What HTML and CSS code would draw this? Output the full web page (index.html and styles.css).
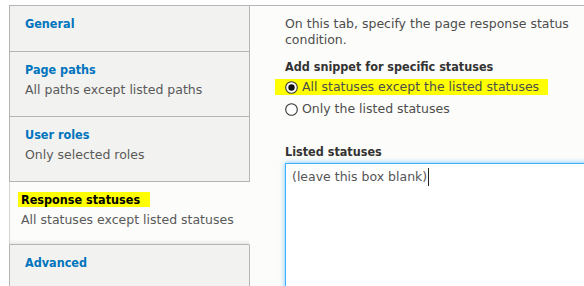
FILE: index.html
```html
<!DOCTYPE html>
<html lang="en">
<head>
<meta charset="utf-8">
<title>Response statuses</title>
<link rel="stylesheet" href="styles.css">
</head>
<body>
<div class="frame">
  <ul class="tabs">
    <li class="tab"><a class="tab-title" href="#">General</a></li>
    <li class="tab"><a class="tab-title" href="#">Page paths</a><span class="summary">All paths except listed paths</span></li>
    <li class="tab"><a class="tab-title" href="#">User roles</a><span class="summary">Only selected roles</span></li>
    <li class="tab is-selected"><span class="tab-title"><mark class="mark">Response statuses</mark></span><span class="summary">All statuses except listed statuses</span></li>
    <li class="tab"><a class="tab-title" href="#">Advanced</a></li>
  </ul>
  <div class="pane">
    <p class="desc">On this tab, specify the page response status condition.</p>
    <div class="label">Add snippet for specific statuses</div>
    <div class="radios">
      <label class="radio is-hl"><svg class="radio-icon" width="13" height="13" viewBox="0 0 13 13"><circle cx="6.5" cy="6.5" r="5.8" fill="#fff" stroke="#333" stroke-width="1.1"/><circle cx="6.5" cy="6.5" r="3.2" fill="#111"/></svg>All statuses except the listed statuses</label>
      <label class="radio"><svg class="radio-icon" width="13" height="13" viewBox="0 0 13 13"><circle cx="6.5" cy="6.5" r="5.8" fill="#fff" stroke="#333" stroke-width="1.1"/></svg>Only the listed statuses</label>
    </div>
    <div class="label label-gap">Listed statuses</div>
    <div class="textarea" role="textbox">(leave this box blank)<span class="caret"></span></div>
  </div>
</div>
</body>
</html>
```
FILE: styles.css
```css
html, body {
  margin: 0;
  padding: 0;
  background: #fff;
  overflow: hidden;
  width: 584px;
  height: 286px;
}
body {
  font-family: "DejaVu Sans", Verdana, sans-serif;
  font-size: 12.5px;
  color: #333;
}
.frame {
  display: flex;
  margin: 5px 0 0 9px;
  width: 575px;
  height: 280px;
  overflow: hidden;
  border-top: 1px solid #b5b5b5;
  background: #fcfcfa;
}
.tabs {
  list-style: none;
  margin: 0;
  padding: 0;
  width: 241px;
  flex: none;
}
.tab {
  display: flex;
  flex-direction: column;
  box-sizing: border-box;
  background: #f2f2f0;
  border-left: 1px solid #b5b5b5;
  border-right: 1px solid #b5b5b5;
  border-bottom: 1px solid #b5b5b5;
  padding: 7px 15px 17px;
}
.tab-title {
  line-height: 21px;
  font-family: "DejaVu Sans Condensed", "DejaVu Sans", sans-serif;
  font-stretch: condensed;
  font-weight: bold;
  color: #0074bd;
  text-decoration: none;
}
.summary {
  line-height: 19px;
  color: #595959;
}
.tab.is-selected {
  background: #fcfcfa;
  border-left-color: #d4d4d4;
  border-right-color: #fcfcfa;
  padding: 7px 15px 15px 11px;
  box-shadow: inset 0 -4px 4px -3px rgba(0, 0, 0, 0.12);
}
.tab.is-selected .tab-title {
  color: #000;
}
.mark {
  background: #ffff00;
  color: #000;
  padding: 0 10px 0 3px;
  margin-left: -3px;
}
.pane {
  flex: 1;
  min-width: 0;
  padding: 10px 0 0 35px;
  color: #4d4d4d;
  line-height: 16px;
}
.desc {
  margin: 0;
  max-width: 300px;
}
.label {
  margin-top: 11px;
  font-family: "DejaVu Sans Condensed", "DejaVu Sans", sans-serif;
  font-stretch: condensed;
  font-weight: bold;
  color: #333;
}
.label-gap {
  margin-top: 27px;
}
.radios {
  display: flex;
  flex-direction: column;
  align-items: flex-start;
  gap: 6px;
  margin-top: 4px;
}
.radio {
  display: flex;
  align-items: center;
  gap: 4px;
  height: 16px;
  padding: 0 9px 0 10px;
  margin-left: -10px;
  color: #4d4d4d;
}
.radio.is-hl {
  background: #ffff00;
}
.radio-icon {
  flex: none;
}
.textarea {
  margin-top: 3px;
  width: 400px;
  height: 200px;
  padding: 4px 6px;
  background: #fff;
  border: 1px solid #40b0ff;
  box-shadow: 0 0 5px rgba(64, 176, 255, 0.75);
  color: #555;
}
.caret {
  display: inline-block;
  width: 1px;
  height: 18px;
  margin-left: 1px;
  vertical-align: -5px;
  background: #222;
}
```
